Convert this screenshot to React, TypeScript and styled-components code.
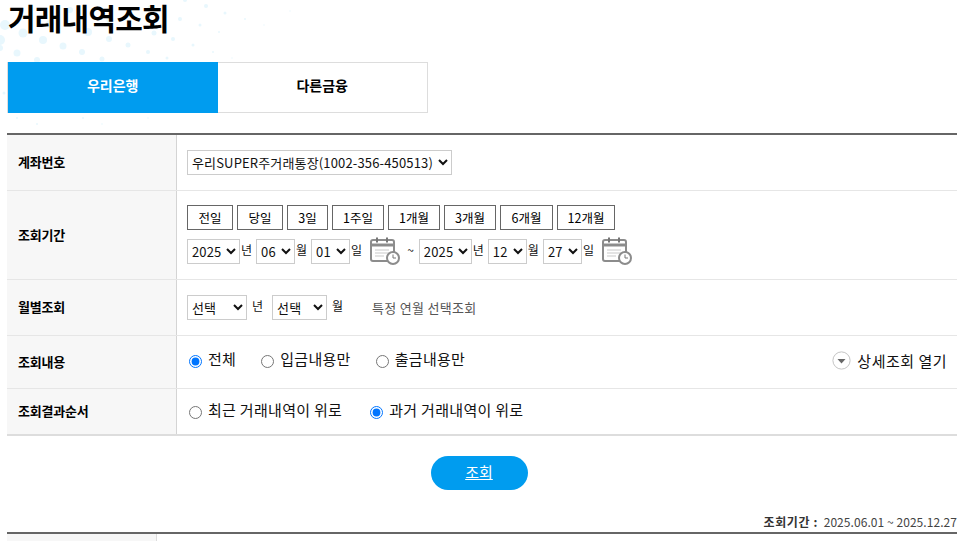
import { FC } from 'react';
import styled, { createGlobalStyle } from 'styled-components';

const GlobalStyle = createGlobalStyle`
  html, body {
    margin: 0;
    padding: 0;
    height: 541px;
    overflow: hidden;
    background: #fff;
    font-family: "Noto Sans CJK KR", "Noto Sans", sans-serif;
    color: #111;
  }
  select, button, input { font-family: inherit; }
`;

const Page = styled.div`
  position: relative;
  width: 950px;
  padding-left: 7px;
`;

const Dots = styled.svg`
  position: absolute;
  left: 0;
  top: 0;
  z-index: 0;
`;

const Title = styled.h1`
  position: relative;
  margin: 0;
  height: 62px;
  padding-left: 1px;
  box-sizing: border-box;
  font-size: 30px;
  line-height: 34px;
  font-weight: 700;
  letter-spacing: -0.8px;
  color: #000;
`;

const Tabs = styled.div`
  position: relative;
  display: flex;
  width: 421px;
  height: 51px;
`;

const Tab = styled.div<{ $active?: boolean }>`
  flex: 1;
  display: flex;
  align-items: center;
  justify-content: center;
  font-size: 14px;
  font-weight: 700;
  padding-bottom: 5px;
  box-sizing: border-box;
  background: ${(p) => (p.$active ? '#009cef' : '#fff')};
  color: ${(p) => (p.$active ? '#fff' : '#000')};
  border: ${(p) => (p.$active ? 'none' : '1px solid #ddd')};
  border-left: ${(p) => (p.$active ? '1px solid #ddd' : 'none')};
`;

const Form = styled.div`
  margin-top: 20px;
  border-top: 2px solid #666;
  border-bottom: 2px solid #ddd;
`;

const Row = styled.div<{ $h: number }>`
  display: flex;
  height: ${(p) => p.$h}px;
  box-sizing: border-box;
  border-bottom: 1px solid #e6e6e6;
  &:last-child { border-bottom: none; }
`;

const Label = styled.div`
  width: 170px;
  flex: none;
  box-sizing: border-box;
  padding: 0 0 2px 11px;
  display: flex;
  align-items: center;
  background: #f7f7f7;
  border-right: 1px solid #d4d4d4;
  font-size: 13px;
  font-weight: 700;
  letter-spacing: -0.2px;
  color: #000;
`;

const Cell = styled.div<{ $lift?: number }>`
  flex: 1;
  padding: 0 10px ${(p) => p.$lift ?? 0}px;
  display: flex;
  flex-direction: column;
  justify-content: center;
  gap: 7px;
  font-size: 13px;
`;

const Line = styled.div<{ $gap?: number }>`
  display: flex;
  align-items: center;
  gap: ${(p) => p.$gap ?? 0}px;
`;

const Select = styled.select<{ $w: number }>`
  width: ${(p) => p.$w}px;
  height: 25px;
  box-sizing: border-box;
  border: 1px solid #ccc;
  border-radius: 0;
  background: #fff;
  color: #111;
  font-size: 13px;
  letter-spacing: 0.15px;
  padding: 0;
`;

const Unit = styled.span`
  font-size: 12px;
  line-height: 14px;
  margin: -3px 4px 0 1px;
  color: #111;
`;

const WideUnit = styled(Unit)`
  margin: -3px 9px 0 5px;
`;

const Tilde = styled(Unit)`
  margin: -3px 5px 0 7px;
`;

const PeriodButton = styled.button<{ $w: number }>`
  width: ${(p) => p.$w}px;
  height: 25px;
  box-sizing: border-box;
  padding: 0;
  background: #fff;
  border: 1px solid #666;
  border-radius: 0;
  color: #000;
  font-size: 12.5px;
`;

const Hint = styled.span`
  margin-left: 20px;
  font-size: 13px;
  letter-spacing: 0.3px;
  color: #555;
`;

const Radio = styled.label`
  display: inline-flex;
  align-items: center;
  gap: 6px;
  font-size: 15px;
  letter-spacing: 0.3px;
  color: #111;
  input {
    margin: 2px 0 0 2px;
    width: 13px;
    height: 13px;
  }
  span { margin-top: -4px; }
`;

const Spread = styled.div`
  display: flex;
  align-items: center;
  justify-content: space-between;
`;

const MoreLink = styled.a`
  display: inline-flex;
  align-items: center;
  gap: 6px;
  font-size: 15px;
  letter-spacing: 0.5px;
  color: #111;
`;

const Actions = styled.div`
  display: flex;
  justify-content: center;
  padding: 20px 6px 0 0;
`;

const SearchButton = styled.a`
  width: 97px;
  height: 34px;
  border-radius: 17px;
  background: #009cef;
  color: #fff;
  font-size: 15px;
  line-height: 32px;
  text-align: center;
  text-decoration: underline;
`;

const Period = styled.div`
  margin-top: 23px;
  height: 17px;
  text-align: right;
  font-size: 12px;
  line-height: 17px;
  color: #444;
  letter-spacing: 0.06px;
  strong { font-weight: 700; color: #333; letter-spacing: 0.6px; margin-right: 3px; }
`;

const ResultHead = styled.div`
  margin-top: 2px;
  border-top: 2px solid #666;
  height: 10px;
  div {
    width: 150px;
    height: 100%;
    box-sizing: border-box;
    background: #f7f7f7;
    border-right: 1px solid #ddd;
  }
`;

const CalendarIcon = styled.svg`
  flex: none;
  margin-left: 4px;
`;

const Calendar: FC = () => (
  <CalendarIcon width="30" height="28" viewBox="0 0 30 28" fill="none">
    <rect x="1" y="3" width="23" height="21" rx="2" fill="#fff" stroke="#8c8c8c" strokeWidth="2" />
    <path d="M1 8h23" stroke="#8c8c8c" strokeWidth="3" />
    <path d="M7 0.5v5M17 0.5v5" stroke="#777" strokeWidth="2" />
    <path d="M5 13h14M5 16h14M5 19h9" stroke="#c9c9c9" />
    <circle cx="23" cy="21" r="6" fill="#fff" stroke="#8c8c8c" strokeWidth="2" />
    <path d="M23 17.5V21h3" stroke="#777" />
  </CalendarIcon>
);

const DownCircleIcon: FC = () => (
  <svg width="19" height="19" viewBox="0 0 19 19">
    <circle cx="9.5" cy="9.5" r="8.6" fill="#fff" stroke="#c4c4c4" />
    <path d="M5.5 8h8l-4 4.5z" fill="#666" />
  </svg>
);

const dots = [
  [23, 33, 4.5], [43, 40, 4], [63, 46, 3.5], [82, 52, 3], [102, 59, 2.5], [17, 53, 3.5], [37, 60, 3],
  [0, 40, 5], [5, 25, 5], [88, 32, 4], [109, 39, 3], [128, 45, 2.5], [148, 52, 2], [167, 58, 1.5],
  [154, 33, 2.5], [173, 39, 2], [193, 45, 1.5], [213, 52, 1], [180, 19, 2], [200, 25, 1.5], [219, 32, 1],
  [206, 6, 2], [225, 13, 1.5], [245, 19, 1], [264, 25, 0.7], [185, 0, 2], [290, 11, 0.7], [232, 58, 0.7],
  [4, 93, 1.5], [17, 118, 1], [37, 124, 1], [83, 118, 1], [102, 124, 0.8], [148, 118, 0.8], [0, 48, 3],
  [70, 10, 3], [130, 14, 3], [150, 8, 2.5], [50, 24, 4], [110, 20, 3.5],
];

const periods: [string, number][] = [
  ['전일', 46], ['당일', 46], ['3일', 41], ['1주일', 52], ['1개월', 52], ['3개월', 52], ['6개월', 53], ['12개월', 58],
];

const DateSelects: FC<{ y: string; m: string; d: string }> = ({ y, m, d }) => (
  <>
    <Select $w={53} defaultValue={y}><option>{y}</option></Select>
    <Unit>년</Unit>
    <Select $w={39} defaultValue={m}><option>{m}</option></Select>
    <Unit>월</Unit>
    <Select $w={39} defaultValue={d}><option>{d}</option></Select>
    <Unit>일</Unit>
  </>
);

export default function App() {
  return (
    <Page>
      <GlobalStyle />
      <Dots width="300" height="130" viewBox="0 0 300 130">
        {dots.map(([cx, cy, r], i) => (
          <circle key={i} cx={cx} cy={cy} r={r} fill="#e8f7fd" />
        ))}
      </Dots>
      <Title>거래내역조회</Title>
      <Tabs>
        <Tab $active>우리은행</Tab>
        <Tab>다른금융</Tab>
      </Tabs>
      <Form>
        <Row $h={56}>
          <Label>계좌번호</Label>
          <Cell>
            <Line>
              <Select $w={265} defaultValue="a">
                <option value="a">우리SUPER주거래통장(1002-356-450513)</option>
              </Select>
            </Line>
          </Cell>
        </Row>
        <Row $h={89}>
          <Label>조회기간</Label>
          <Cell>
            <Line $gap={4}>
              {periods.map(([text, w]) => (
                <PeriodButton key={text} $w={w}>{text}</PeriodButton>
              ))}
            </Line>
            <Line>
              <DateSelects y="2025" m="06" d="01" />
              <Calendar />
              <Tilde>~</Tilde>
              <DateSelects y="2025" m="12" d="27" />
              <Calendar />
            </Line>
          </Cell>
        </Row>
        <Row $h={56}>
          <Label>월별조회</Label>
          <Cell>
            <Line>
              <Select $w={60} defaultValue="선택"><option>선택</option></Select>
              <WideUnit>년</WideUnit>
              <Select $w={55} defaultValue="선택"><option>선택</option></Select>
              <WideUnit>월</WideUnit>
              <Hint>특정 연월 선택조회</Hint>
            </Line>
          </Cell>
        </Row>
        <Row $h={53}>
          <Label>조회내용</Label>
          <Cell $lift={4}>
            <Spread>
              <Line $gap={23}>
                <Radio><input type="radio" name="kind" defaultChecked /><span>전체</span></Radio>
                <Radio><input type="radio" name="kind" /><span>입금내용만</span></Radio>
                <Radio><input type="radio" name="kind" /><span>출금내용만</span></Radio>
              </Line>
              <MoreLink><DownCircleIcon />상세조회 열기</MoreLink>
            </Spread>
          </Cell>
        </Row>
        <Row $h={45}>
          <Label>조회결과순서</Label>
          <Cell>
            <Line $gap={26}>
              <Radio><input type="radio" name="order" /><span>최근 거래내역이 위로</span></Radio>
              <Radio><input type="radio" name="order" defaultChecked /><span>과거 거래내역이 위로</span></Radio>
            </Line>
          </Cell>
        </Row>
      </Form>
      <Actions>
        <SearchButton>조회</SearchButton>
      </Actions>
      <Period><strong>조회기간 :</strong> 2025.06.01 ~ 2025.12.27</Period>
      <ResultHead><div /></ResultHead>
    </Page>
  );
}
